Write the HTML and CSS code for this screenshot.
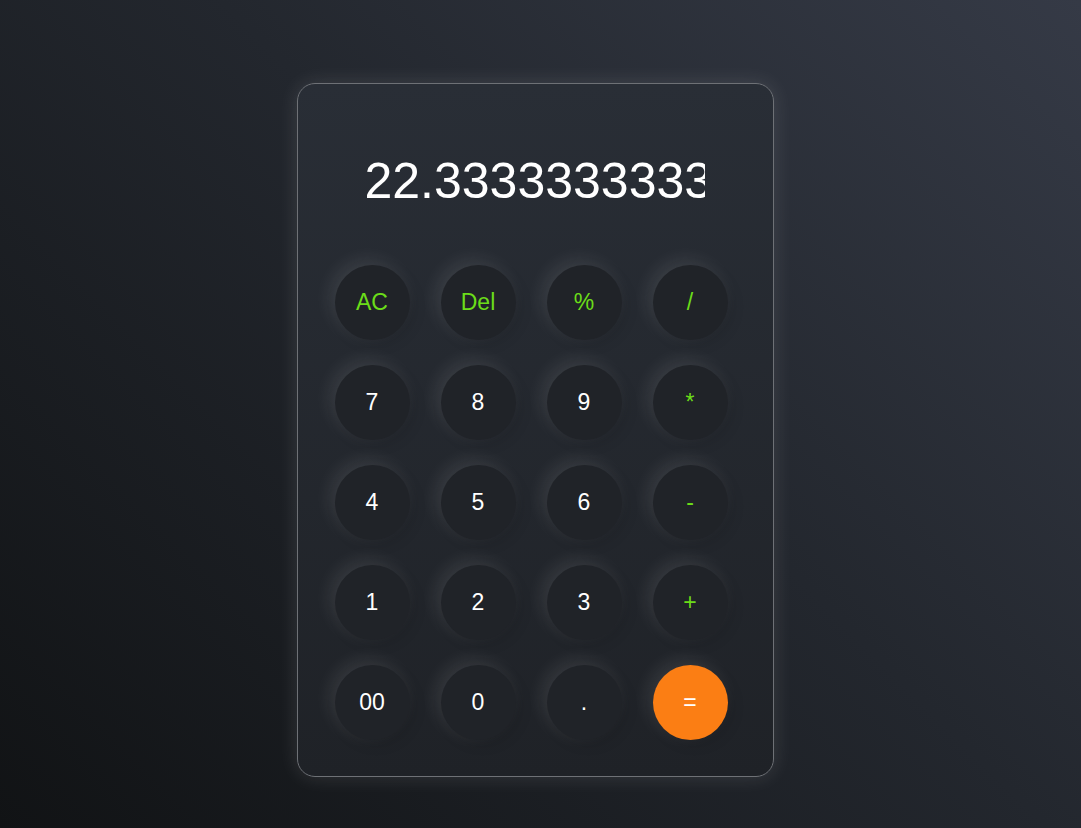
FILE: index.html
```html
<!DOCTYPE html>
<html>
<head>
<meta charset="utf-8">
<link rel="stylesheet" href="styles.css">
</head>
<body>
<div class="page">
  <div class="calc">
    <div class="display"><span class="value">22.333333333333332</span></div>
    <div class="keys">
      <button class="key op">AC</button>
      <button class="key op">Del</button>
      <button class="key op">%</button>
      <button class="key op">/</button>
      <button class="key">7</button>
      <button class="key">8</button>
      <button class="key">9</button>
      <button class="key op">*</button>
      <button class="key">4</button>
      <button class="key">5</button>
      <button class="key">6</button>
      <button class="key op">-</button>
      <button class="key">1</button>
      <button class="key">2</button>
      <button class="key">3</button>
      <button class="key op">+</button>
      <button class="key">00</button>
      <button class="key">0</button>
      <button class="key">.</button>
      <button class="key eq">=</button>
    </div>
  </div>
</div>
</body>
</html>
```
FILE: styles.css
```css
html, body {
  margin: 0;
  padding: 0;
  height: 100%;
}
body {
  background: linear-gradient(45deg, #111315 0%, #23272e 55%, #353a46 100%);
  font-family: "Liberation Sans", Arial, sans-serif;
}
.page {
  height: 828px;
  display: flex;
  justify-content: center;
  align-items: flex-start;
  padding-top: 83px;
  box-sizing: border-box;
  padding-right: 11px;
}
.calc {
  width: 477px;
  height: 694px;
  box-sizing: border-box;
  border: 1px solid #6e7176;
  border-radius: 18px;
  background: linear-gradient(180deg, #292e36 0%, #1f2227 100%);
  box-shadow: 0 0 20px rgba(255,255,255,0.12);
  padding: 0 44px 35px 37px;
  display: flex;
  flex-direction: column;
}
.display {
  height: 181px;
  display: flex;
  align-items: center;
  padding-left: 30px;
  padding-top: 12px;
  box-sizing: border-box;
}
.value {
  display: block;
  width: 340px;
  overflow: hidden;
  white-space: nowrap;
  color: #ffffff;
  font-size: 50px;
  line-height: 60px;
}
.keys {
  display: grid;
  grid-template-columns: repeat(4, 75px);
  grid-auto-rows: 75px;
  column-gap: 31px;
  row-gap: 25px;
}
.key {
  width: 75px;
  height: 75px;
  border: none;
  border-radius: 50%;
  background: #202328;
  color: #ffffff;
  font-family: "Liberation Sans", Arial, sans-serif;
  font-size: 23px;
  padding: 0;
  box-shadow: -5px -5px 18px rgba(255,255,255,0.1), 4px 4px 14px rgba(0,0,0,0.12);
}
.key.op {
  color: #6bdd19;
}
.key.eq {
  background: #fb7e14;
  color: #ffffff;
}
```
